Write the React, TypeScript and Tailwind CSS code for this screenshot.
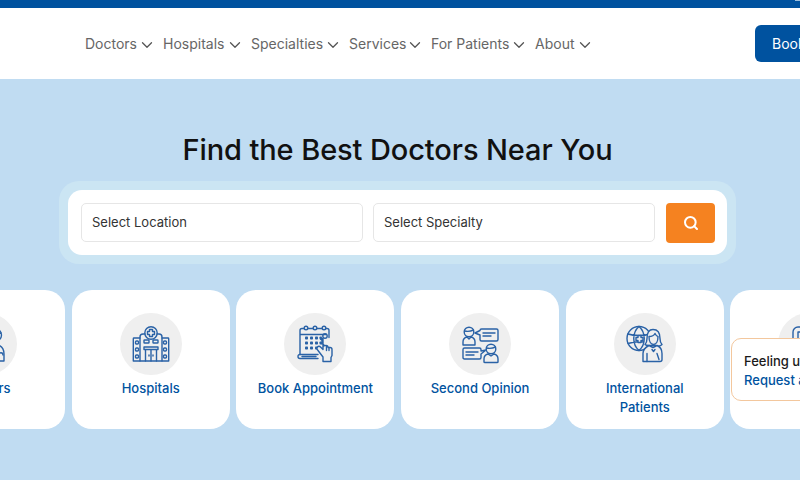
import { ChevronDown, Search } from "lucide-react";
import type { ReactNode } from "react";

const NAV_ITEMS = [
  { label: "Doctors", width: "w-[51px]" },
  { label: "Hospitals", width: "w-[61px]" },
  { label: "Specialties", width: "w-[71px]" },
  { label: "Services", width: "w-[55px]" },
  { label: "For Patients", width: "w-[77px]" },
  { label: "About", width: "w-[39px]" },
];

function IconBase({ size, children }: { size: number; children: ReactNode }) {
  return (
    <svg
      width={size}
      height={size}
      viewBox={`0 0 ${size} ${size}`}
      fill="none"
      stroke="#2a62a6"
      strokeWidth="1.4"
      strokeLinecap="round"
      strokeLinejoin="round"
      className="overflow-visible"
    >
      {children}
    </svg>
  );
}

function DoctorIcon() {
  return (
    <IconBase size={36}>
      <circle cx="27" cy="9" r="6.500" />
      <path d="M21 7c2 1 9 1 12 0M24 15v3l3 3 3-3v-3" />
      <path d="M16 35v-7c0-5 4-8 8-9l3 4 3-4c3 1 6 4 6 9v7z" />
      <path d="M31 29c0-3 4-3 4 0" />
    </IconBase>
  );
}

function HospitalIcon() {
  return (
    <IconBase size={36}>
      <circle cx="18" cy="7" r="6.200" />
      <path d="M16.500 3.500h3v2h2v3h-2v2h-3v-2h-2v-3h2z" />
      <path d="M7 35V11q0-3 3-3h2M24 8h2q3 0 3 3v24" />
      <path d="M7 12H1q-.7 0-.7.7V35H35.700V12.700q0-.7-.7-.7h-6" />
      <rect x="11" y="14" width="5" height="3" rx=".6" />
      <rect x="20" y="14" width="5" height="3" rx=".6" />
      <path d="M11 21h14v2.500H11zM12.500 23.500V35M23.500 23.500V35M18 24v11" />
      <path d="M16 29v1M20 29v1" />
      <rect x="2.500" y="15" width="3" height="3" rx="1" />
      <rect x="2.500" y="22" width="3" height="3" rx="1" />
      <rect x="2.500" y="29" width="3" height="3" rx="1" />
      <rect x="30.500" y="15" width="3" height="3" rx="1" />
      <rect x="30.500" y="22" width="3" height="3" rx="1" />
      <rect x="30.500" y="29" width="3" height="3" rx="1" />
    </IconBase>
  );
}

function CalendarIcon() {
  return (
    <IconBase size={37}>
      <g transform="translate(0 -1.500)">
        <path d="M3 30V6q0-2 2-2h25q2 0 2 2v7M3 10h26" />
        <circle cx="9" cy="3.500" r="1.800" fill="#efefef" />
        <circle cx="18" cy="3.500" r="1.800" fill="#efefef" />
        <circle cx="27" cy="3.500" r="1.800" fill="#efefef" />
        <circle cx="28" cy="11.500" r="2.200" />
        <g fill="#2a62a6" stroke="none">
          <rect x="8" y="12" width="3" height="3" rx=".8" />
          <rect x="13" y="12" width="3" height="3" rx=".8" />
          <rect x="18" y="12" width="3" height="3" rx=".8" />
          <rect x="22.500" y="12" width="2.500" height="3" rx=".8" />
          <rect x="8" y="17" width="3" height="3" rx=".8" />
          <rect x="13" y="17" width="3" height="3" rx=".8" />
          <rect x="18" y="17" width="3" height="3" rx=".8" />
          <rect x="22.500" y="17" width="2.500" height="3" rx=".8" />
          <rect x="8" y="22" width="3" height="3" rx=".8" />
          <rect x="13" y="22" width="3" height="3" rx=".8" />
          <rect x="18" y="22" width="3" height="3" rx=".8" />
        </g>
        <path d="M21 30H3q-2 0-2 2t2 2h18M5 32h14" />
        <path
          d="M26 14v11l-2-2q-2-2-3.500-.5t.5 3.500l5 6.500V37h8v-4l1-2v-6q0-2-2-2t-2 0q0-2-2-2t-2 .500q0-2-2-2v-3q0-1.500-1-1.500T26 14z"
          fill="#efefef"
        />
        <path d="M32 23v3M29.500 21.500V26" />
      </g>
    </IconBase>
  );
}

function OpinionIcon() {
  return (
    <IconBase size={37}>
      <circle cx="7" cy="6" r="4.800" />
      <path d="M2.500 5c2 .5 6 .5 9-1" />
      <path d="M1 19v-3q0-4 4-5l2 2 2-2q4 1 4 5v3z" />
      <path d="M18 4.500q0-1.500 1.500-1.500h15q1.500 0 1.500 1.500v9q0 1.500-1.500 1.500h-15q-1.500 0-1.500-1.500V9l-5-2z" />
      <path d="M21 7h12M21 10h8" />
      <path d="M1 23.500q0-1.500 1.500-1.500h15q1.500 0 1.500 1.500V25l5-1-5 4v3.500q0 1.500-1.500 1.500h-15Q1 33 1 31.500z" />
      <path d="M4 26h12M4 29h8" />
      <circle cx="29" cy="23" r="4.800" />
      <path d="M24.500 22c2 .5 6 .5 9-1" />
      <path d="M22 36v-3q0-4 4-5l3 2 3-2q4 1 4 5v3q0 .5-1 .5H23q-1 0-1-.5z" />
    </IconBase>
  );
}

function GlobeIcon() {
  return (
    <IconBase size={37}>
      <g transform="translate(0 -2.500)">
        <circle cx="13" cy="15" r="12" />
        <path d="M13 3c-7 6-7 18 0 24M13 3c7 6 7 18 0 24M2 10.500c6 2 16 2 22 0M2 20c6-2 12-2 16-1.500" />
        <path d="M12 12h3v2h2v3h-2v2h-3v-2h-2v-3h2z" fill="#efefef" />
        <path
          d="M21 15c0-6 2-9 6-9s7 3 7 9c0 3 1 5 2 6-2 2-5 2-6 1h-7c-1 0-3 0-4-1 1-1 2-3 2-6z"
          fill="#efefef"
        />
        <path d="M23 13c3 0 5-1 6-3 1 2 2 3 3 3 0 5-2 8-4.500 8S23 18 23 13z" />
        <path d="M17 38v-8q0-5 6-8l4 2 4-2q5 2 5 8v6q0 2-2 2H17z" fill="#efefef" />
        <path d="M21 30v8M31 30l2 6M26 26l1.500 2 1.500-2" />
      </g>
    </IconBase>
  );
}

function PartialIcon() {
  return (
    <IconBase size={36}>
      <rect x="2" y="1" width="32" height="34" rx="5" />
      <path d="M7 6h22v12H7z" />
    </IconBase>
  );
}

function ServiceCard({ icon, lines }: { icon: ReactNode; lines: string[] }) {
  return (
    <div className="w-[158px] h-[139px] shrink-0 rounded-[20px] bg-white flex flex-col items-center pt-[23px]">
      <div className="w-[62px] h-[62px] rounded-full bg-[#efefef] flex items-center justify-center">
        {icon}
      </div>
      <div className="mt-[4px] text-center text-[13px] leading-[19px] font-medium text-[#00539f] whitespace-nowrap">
        {lines.map((line) => (
          <div key={line}>{line}</div>
        ))}
      </div>
    </div>
  );
}

function SelectField({ label }: { label: string }) {
  return (
    <div className="w-[282px] h-[39px] rounded-[5px] border border-[#e6e6e6] bg-white flex items-center pl-[10px] text-[13px] text-[#333]">
      {label}
    </div>
  );
}

export default function App() {
  return (
    <div className="relative w-[800px] h-[480px] overflow-hidden bg-[#c0dcf2] font-['Inter','Liberation_Sans',sans-serif]">
      <div className="h-[8px] bg-[#00529f]" />
      <div className="absolute right-0 top-0 w-[5px] h-[1px] bg-[#9fc0dd]" />

      <header className="h-[71px] bg-white flex items-center pl-[85px] overflow-hidden">
        <nav className="shrink-0 flex items-center gap-[7px] text-[14px] text-[#666]">
          {NAV_ITEMS.map((item) => (
            <div key={item.label} className="flex items-center gap-[2px]">
              <span className={`${item.width} whitespace-nowrap`}>{item.label}</span>
              <ChevronDown size={18} strokeWidth={1.7} className="shrink-0 text-[#555] mt-[2px]" />
            </div>
          ))}
        </nav>
        <button
          type="button"
          className="ml-[161px] shrink-0 w-[150px] h-[37px] rounded-[6px] bg-[#00529f] text-white text-[14px] text-left pl-[17px] whitespace-nowrap"
        >
          Book Appointment
        </button>
      </header>

      <main className="flex flex-col">
        <h1 className="mt-[52px] h-[38px] pr-[5px] text-center text-[29px] leading-[38px] tracking-[-0.1px] font-medium text-[#111]">
          Find the Best Doctors Near You
        </h1>

        <div className="mt-[12px] ml-[59px] w-[677px] rounded-[20px] bg-[#cbe5f3] p-[9px]">
          <div className="h-[65px] rounded-[14px] bg-white flex items-center pl-[13px] gap-[10px]">
            <SelectField label="Select Location" />
            <SelectField label="Select Specialty" />
            <button
              type="button"
              className="ml-[1px] w-[49px] h-[40px] rounded-[4px] bg-[#f58220] flex items-center justify-center"
            >
              <Search size={16} strokeWidth={3} className="text-white" />
            </button>
          </div>
        </div>

        <div className="mt-[26px] ml-[-93px] flex gap-[6.7px]">
          <ServiceCard icon={<DoctorIcon />} lines={["Doctors"]} />
          <ServiceCard icon={<HospitalIcon />} lines={["Hospitals"]} />
          <ServiceCard icon={<CalendarIcon />} lines={["Book Appointment"]} />
          <ServiceCard icon={<OpinionIcon />} lines={["Second Opinion"]} />
          <ServiceCard icon={<GlobeIcon />} lines={["International", "Patients"]} />
          <ServiceCard icon={<PartialIcon />} lines={[]} />
        </div>
      </main>

      <div className="absolute left-[731px] top-[338px] w-[190px] h-[63px] rounded-[10px] border border-[#f3c79d] bg-white pl-[12px] pt-[13px] text-[13px] leading-[19px] font-medium whitespace-nowrap">
        <div className="text-[#1a1a1a]">Feeling unwell?</div>
        <div className="text-[#00539f]">Request a callback</div>
      </div>
    </div>
  );
}
